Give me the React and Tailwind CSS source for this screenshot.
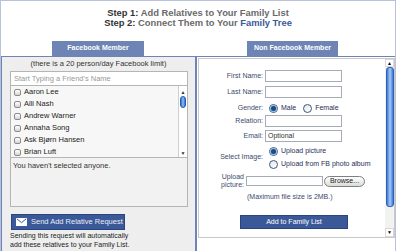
import React from "react";

const friends = [
  "Aaron Lee",
  "Alli Nash",
  "Andrew Warner",
  "Annaha Song",
  "Ask Bjørn Hansen",
  "Brian Luft",
];

// Mac-style little checkbox
const MacCheck = () => (
  <span className="w-[7px] h-[7px] rounded-[2px] border border-[#8a8a8a] bg-gradient-to-b from-white to-[#d6d6d6] shrink-0" />
);

// XP-style radio
const Radio = ({ checked }) => (
  <span className="w-[9px] h-[9px] rounded-full border border-[#3c5587] bg-gradient-to-br from-[#e6e6e0] to-white flex items-center justify-center shrink-0">
    {checked && <span className="w-[5px] h-[5px] rounded-full bg-[#27457e] ring-1 ring-[#7fc4e6]" />}
  </span>
);

const Field = ({ label, value, className = "" }) => (
  <div className={`flex items-center ${className}`}>
    <span className="w-[66px] pr-[2px] text-right text-[#3c4a6e]">{label}</span>
    <div className="w-[77px] h-[12px] border border-[#a5acb5] bg-white px-[2px] text-[#333] leading-[10px]">
      {value}
    </div>
  </div>
);

const FbButton = ({ children, className = "" }) => (
  <div
    className={`bg-[#3b5998] border border-[#29447e] text-white flex items-center ${className}`}
  >
    {children}
  </div>
);

export default function App() {
  return (
    <div className="w-[396px] h-[251px] overflow-hidden bg-white border-t border-l border-r border-[#b8c2dc] font-['Liberation_Sans',Arial,sans-serif] flex flex-col">
      {/* Steps heading */}
      <div className="pt-[7px] text-center font-bold text-[9.4px] leading-[10px]">
        <div>
          <span className="text-[#333]">Step 1: </span>
          <span className="text-[#6a6a6a]">Add Relatives to Your Family List</span>
        </div>
        <div>
          <span className="text-[#333]">Step 2: </span>
          <span className="text-[#6a6a6a]">Connect Them to Your </span>
          <span className="text-[#3b5998]">Family Tree</span>
        </div>
      </div>

      {/* Tabs */}
      <div className="mt-[13px] flex h-[15px]">
        <div className="ml-[51px] w-[92px] bg-[#6d84b4] text-white font-bold text-[7px] flex items-center justify-center">
          Facebook Member
        </div>
        <div className="ml-[103px] w-[91px] bg-[#6d84b4] text-white font-bold text-[7px] flex items-center justify-center">
          Non Facebook Member
        </div>
      </div>

      <div className="flex flex-1 min-h-0 border-t border-[#6d84b4]">
        {/* Facebook member panel */}
        <div className="w-[196px] border-l border-r-2 border-[#6d84b4] bg-[#eeeeee] flex flex-col text-[7.5px] text-[#333]">
          <div className="pt-[2px] text-center leading-[10px]">
            (there is a 20 person/day Facebook limit)
          </div>
          <div className="ml-[8px] w-[178px] mt-[2px] h-[15px] bg-white border border-[#b5b5b5] flex items-center px-[3px] text-[#999]">
            Start Typing a Friend's Name
          </div>
          <div className="ml-[8px] w-[178px] h-[73px] -mt-px bg-[#f7f7f7] border border-[#b5b5b5] flex">
            <div className="flex-1">
              {friends.map((f) => (
                <div key={f} className="h-[12px] flex items-center gap-[3px] pl-[3px]">
                  <MacCheck />
                  <span className="text-[#222]">{f}</span>
                </div>
              ))}
            </div>
            <div className="w-[9px] border-l border-[#cfcfcf] bg-white flex flex-col items-center">
              <span className="text-[5px] leading-[8px] mt-[2px]">▲</span>
              <span className="w-[6px] h-[12px] rounded-full bg-gradient-to-r from-[#2f6fd0] via-[#8ec0f5] to-[#2f6fd0] border border-[#2b5aa8]" />
              <span className="flex-1" />
              <span className="text-[5px] leading-[8px]">▼</span>
            </div>
          </div>
          <div className="ml-[8px] w-[178px] h-[50px] -mt-px bg-[#f2f2f2] border border-[#b5b5b5] px-[2px] pt-[3px] leading-[10px]">
            You haven't selected anyone.
          </div>
          <FbButton className="ml-[9px] w-[114px] h-[16px] mt-[7px] gap-[4px] pl-[4px] text-[7.5px]">
            <svg width="11" height="8" viewBox="0 0 11 8">
              <rect x="0.5" y="0.5" width="10" height="7" fill="white" stroke="white" />
              <path d="M0.8 0.8 L5.5 4.6 L10.2 0.8" fill="none" stroke="#3b5998" strokeWidth="1" />
            </svg>
            <span className="text-[#e8edf7]">Send Add Relative Request</span>
          </FbButton>
          <div className="ml-[8px] mt-[1px] leading-[9px] text-[7px] text-[#222]">
            Sending this request will automatically
            <br />
            add these relatives to your Family List.
          </div>
        </div>

        {/* Non facebook member panel */}
        <div className="flex-1 flex flex-col bg-white">
          <div className="mt-[1px] ml-[1px] h-[180px] border border-[#c9c9c9] flex text-[7px]">
            <div className="flex-1 flex flex-col pt-[11px]">
              <Field label="First Name:" />
              <Field label="Last Name:" className="mt-[4px]" />
              <div className="flex items-center mt-[4px] h-[12px]">
                <span className="w-[66px] pr-[2px] text-right text-[#3c4a6e]">Gender:</span>
                <span className="ml-[4px] flex items-center gap-[3px] text-[#1f2d5a]">
                  <Radio checked />
                  Male
                </span>
                <span className="ml-[7px] flex items-center gap-[3px] text-[#1f2d5a]">
                  <Radio />
                  Female
                </span>
              </div>
              <Field label="Relation:" className="mt-[1px]" />
              <Field label="Email:" className="mt-[3px]" value="Optional" />
              <div className="flex items-center mt-[4px]">
                <span className="w-[66px] pr-[2px] text-right text-[#3c4a6e]">Select Image:</span>
                <div className="ml-[4px] flex flex-col gap-[3px] text-[#1f2d5a]">
                  <span className="flex items-center gap-[3px] h-[10px]">
                    <Radio checked />
                    Upload picture
                  </span>
                  <span className="flex items-center gap-[3px] h-[10px]">
                    <Radio />
                    Upload from FB photo album
                  </span>
                </div>
              </div>
              <div className="flex items-center mt-[4px]">
                <span className="ml-[19px] w-[28px] pr-[2px] text-right leading-[8px] text-[#3c4a6e]">
                  Upload picture:
                </span>
                <div className="w-[77px] h-[10px] border border-[#a5acb5] bg-white" />
                <div className="ml-[1px] w-[41px] h-[11px] rounded-full border border-[#7a7f88] bg-gradient-to-b from-white to-[#dcdcd6] flex items-center justify-center text-[#222]">
                  Browse...
                </div>
              </div>
              <div className="ml-[48px] mt-[3px] leading-[10px] text-[#3c4a6e]">
                (Maximum file size is 2MB.)
              </div>
              <FbButton className="ml-[41px] mt-[13px] w-[108px] h-[14px] justify-center text-[7px]">
                Add to Family List
              </FbButton>
            </div>
            {/* XP scrollbar */}
            <div className="w-[9px] bg-[#f2f2ee] flex flex-col items-center">
              <span className="w-[9px] h-[8px] bg-white border border-[#d8d8d8] flex items-center justify-center text-[5px] leading-[5px]">
                ▲
              </span>
              <span className="w-[8px] h-[140px] rounded-[3px] bg-gradient-to-r from-[#3b76d4] via-[#a9cbf5] to-[#3b76d4] border border-[#2d63b8]" />
              <span className="flex-1" />
              <span className="w-[9px] h-[9px] bg-white border border-[#d8d8d8] flex items-center justify-center text-[5px] leading-[5px]">
                ▼
              </span>
            </div>
          </div>
        </div>
      </div>
    </div>
  );
}
